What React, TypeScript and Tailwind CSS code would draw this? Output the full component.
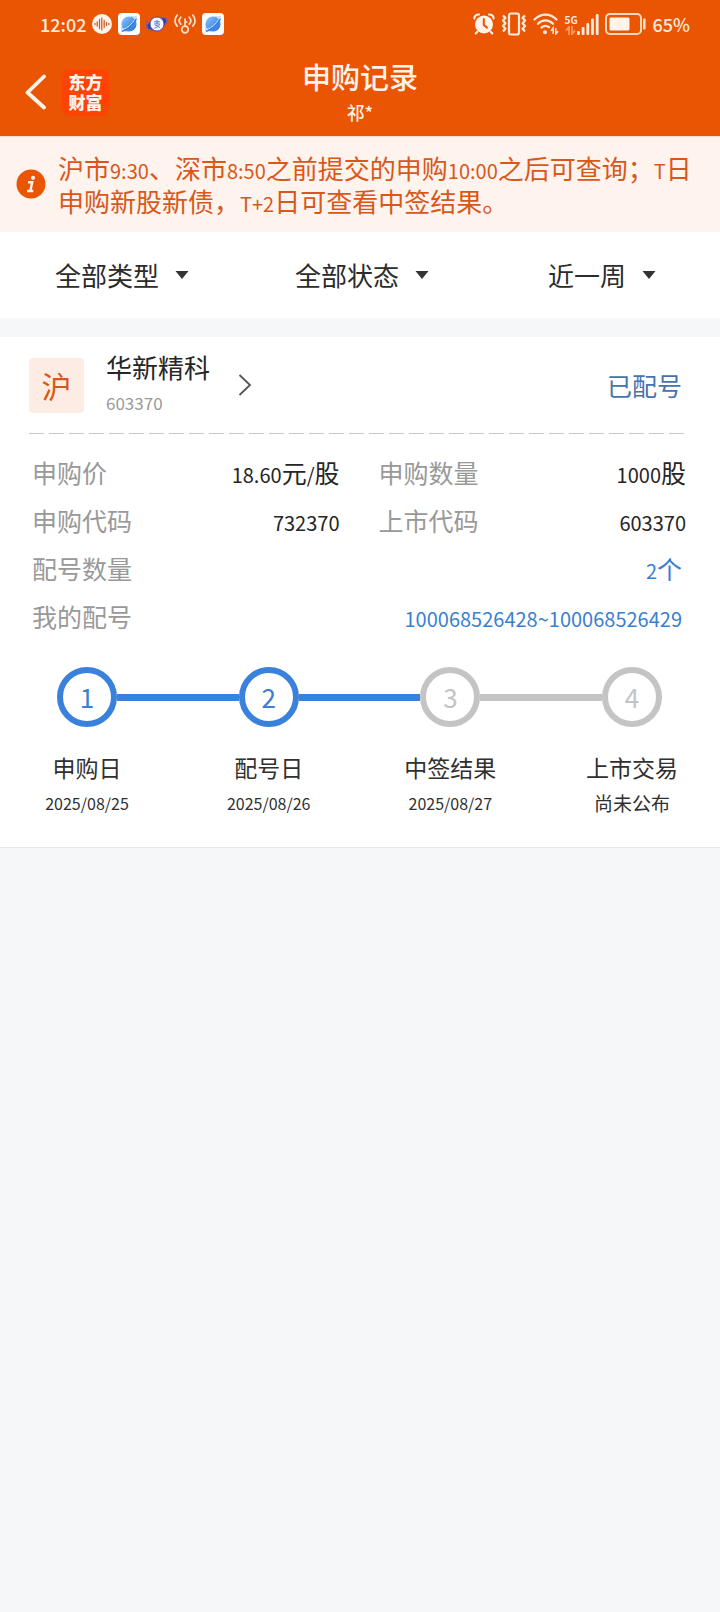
import React from "react";

const NOTICE =
  "沪市9:30、深市8:50之前提交的申购10:00之后可查询；T日申购新股新债，T+2日可查看中签结果。";

/* Sets runs of digits and Latin letters a step smaller than the Chinese around them. */
function Mixed({ text }: { text: string }) {
  return (
    <>
      {text.split(/([0-9A-Z:.+~/]+)/).map((part, i) =>
        i % 2 === 1 ? (
          <span key={i} className="text-[20px] leading-5">
            {part}
          </span>
        ) : (
          part
        ),
      )}
    </>
  );
}

function VoiceIcon() {
  return (
    <svg width="20" height="20" viewBox="0 0 20 20" aria-hidden="true">
      <circle cx="10" cy="10" r="10" fill="#fff3ea" />
      <path
        d="M3 9.5v1M5.2 8v4M7.500 5.500v9M9.800 4v12M12.200 6.500v7M14.500 8.500v3M16.800 9.5v1"
        stroke="#c9602f"
        strokeWidth="1.300"
        strokeLinecap="round"
      />
    </svg>
  );
}

function PlanetIcon({ id }: { id: string }) {
  return (
    <svg width="22" height="22" viewBox="0 0 22 22" aria-hidden="true">
      <defs>
        <linearGradient id={id} x1="0" y1="0" x2="1" y2="1">
          <stop offset="0" stopColor="#8cc6fb" />
          <stop offset="1" stopColor="#1f6fdc" />
        </linearGradient>
      </defs>
      <rect width="22" height="22" rx="4" fill="#fdfdfd" />
      <path d="M12 3h7v6zM3 13v6h7z" fill="#cfe0f8" />
      <circle cx="11" cy="11" r="7.6" fill={`url(#${id})`} />
      <path d="M5 16.500C9.500 15 14.500 10.500 17.200 6" stroke="#cfe6ff" strokeWidth="1" fill="none" />
      <path d="M4 18.300c5-1 11.500-6.300 14.400-12.600" stroke="#2f7be6" strokeWidth="1.200" fill="none" />
    </svg>
  );
}

function PayIcon() {
  return (
    <svg width="22" height="18" viewBox="0 0 22 18" aria-hidden="true">
      <ellipse cx="11" cy="9" rx="11" ry="5" transform="rotate(-22 11 9)" fill="#3b3a94" />
      <path d="M1.500 5.500c-1.200 3-.8 7 .5 8.500 1 .8 2 .8 3.500.4M15 3.200c2-.6 4.500-.8 5.300.8.600 1.500 0 4-1.300 6" stroke="#6a62b8" strokeWidth="1.300" fill="none" />
      <circle cx="11" cy="9" r="7" fill="#f4f7ff" stroke="#3b3a94" strokeWidth="0.800" />
      <path
        d="M8 6.800h6M11 4.800v4M8.200 8.900h5.400c-.8 2.400-2.800 3.800-5.200 4.200M8.900 10c1.800.4 3.500 1.300 5 2.600"
        stroke="#4e6cc0"
        strokeWidth="0.900"
        fill="none"
      />
    </svg>
  );
}

function KeySignalIcon() {
  return (
    <svg width="22" height="20" viewBox="0 0 22 20" fill="none" stroke="#ffe3cf" strokeWidth="1.700" strokeLinecap="round" aria-hidden="true">
      <path d="M3.200 1.200c-3 3.200-3 7.800 0 11M6.800 3.200c-2 2.200-2 5 0 7M18.800 1.200c3 3.200 3 7.800 0 11M15.200 3.200c2 2.200 2 5 0 7" />
      <circle cx="11" cy="15.500" r="3.300" />
      <path d="M11 12V5M11 8h1.800" />
    </svg>
  );
}

function AlarmIcon() {
  return (
    <svg width="22" height="22" viewBox="0 0 22 22" aria-hidden="true">
      <circle cx="11" cy="11.500" r="9" fill="#fff3ea" />
      <path
        d="M1.300 5.600C1.500 3 3.500 1.500 6 1.500M20.700 5.600C20.500 3 18.500 1.500 16 1.500M4.500 18.500l-1.800 2M17.500 18.500l1.800 2"
        stroke="#fff3ea"
        strokeWidth="2"
        strokeLinecap="round"
        fill="none"
      />
      <path d="M10.800 6v6l3.200 2.600" stroke="#ea5504" strokeWidth="2" fill="none" strokeLinecap="round" />
    </svg>
  );
}

function VibrateIcon() {
  return (
    <svg width="26" height="24" viewBox="0 0 26 24" fill="none" stroke="#ffeadb" aria-hidden="true">
      <rect x="8" y="1.500" width="10" height="21" rx="2" strokeWidth="2.200" />
      <path
        d="M2 3.500l2.400 2.400L2 8.600l2.400 2.700L2 14l2.400 2.700L2 19.500M24 3.500l-2.400 2.400L24 8.600l-2.400 2.700L24 14l-2.400 2.700L24 19.500"
        strokeWidth="2.200"
        strokeLinejoin="round"
      />
    </svg>
  );
}

function WifiIcon() {
  return (
    <svg width="26" height="22" viewBox="0 0 26 22" fill="none" aria-hidden="true">
      <path
        d="M1.500 6.500c6.500-6.500 15.500-6.500 22 0M5 10.800c4.500-4.500 10.500-4.500 15 0M8.500 14.600c2.400-2.200 5.200-2.200 7.500-.4"
        stroke="#ffeadb"
        strokeWidth="2.200"
        strokeLinecap="round"
      />
      <circle cx="12" cy="19.200" r="2" fill="#ffeadb" />
      <path d="M20.200 21v-6l-2.200 2.800M22.800 15v6l2.200-2.800" stroke="#ffeadb" strokeWidth="1.500" />
    </svg>
  );
}

function SignalIcon() {
  return (
    <span className="flex items-end">
      <span className="flex w-3 flex-col">
        <span className="text-[10px] leading-3 font-bold text-[#ffeadb]">5G</span>
        <svg width="11" height="9" viewBox="0 0 11 9" fill="none" aria-hidden="true">
          <path d="M4 9V1L1 4.500M7 0v8l3-3.500" stroke="#ff9a63" strokeWidth="1.800" />
        </svg>
      </span>
      <svg width="22" height="21" viewBox="0 0 22 21" fill="#ffeadb" aria-hidden="true">
        <rect x="0" y="17" width="2.800" height="4" rx="1" />
        <rect x="4.700" y="13" width="2.800" height="8" rx="1" />
        <rect x="9.400" y="9" width="2.800" height="12" rx="1" />
        <rect x="14.100" y="4.500" width="2.800" height="16.500" rx="1" />
        <rect x="18.800" y="0" width="2.800" height="21" rx="1" />
      </svg>
    </span>
  );
}

function BatteryIcon() {
  return (
    <svg width="42" height="22" viewBox="0 0 42 22" aria-hidden="true">
      <rect x="1" y="1" width="35" height="20" rx="4" fill="none" stroke="#ffd9bd" strokeWidth="2" />
      <rect x="4.500" y="4.500" width="20" height="13" rx="1.500" fill="#fff3ea" />
      <rect x="38" y="5.500" width="2.600" height="11" rx="1" fill="#ffe3cf" />
    </svg>
  );
}

function StatusBar() {
  return (
    <div className="flex h-12 items-center justify-between pr-[30px] pl-10 text-[18px] leading-6 font-medium text-[#ffeadb]">
      <div className="flex items-center gap-[6px]">
        <span>12:02</span>
        <VoiceIcon />
        <PlanetIcon id="planet-a" />
        <PayIcon />
        <KeySignalIcon />
        <PlanetIcon id="planet-b" />
      </div>
      <div className="flex items-center gap-[6px]">
        <AlarmIcon />
        <VibrateIcon />
        <WifiIcon />
        <SignalIcon />
        <BatteryIcon />
        <span>65%</span>
      </div>
    </div>
  );
}

function TitleBar() {
  return (
    <div className="grid h-[88px] grid-cols-[1fr_auto_1fr] items-start">
      <div className="flex items-center gap-4 pt-5 pl-6">
        <button type="button" aria-label="返回" className="flex h-12 w-[22px] items-center">
          <svg width="22" height="36" viewBox="0 0 22 36" fill="none" aria-hidden="true">
            <path d="M20 2.500L3.500 18.500 20 33.500" stroke="#fff3ea" strokeWidth="3.800" strokeLinecap="round" strokeLinejoin="round" />
          </svg>
        </button>
        <span className="flex size-[47px] items-center justify-center rounded-lg bg-[#ff4305] text-[#fff3ea]">
          <span className="w-9 text-center text-[17px] leading-5 font-black">东方财富</span>
        </span>
      </div>
      <div className="flex flex-col items-center pt-2 text-[#fff3ea]">
        <h1 className="text-[29px] leading-10 font-medium">申购记录</h1>
        <p className="text-[18px] leading-8 font-medium">祁*</p>
      </div>
    </div>
  );
}

function Filter({ label }: { label: string }) {
  return (
    <button type="button" className="flex items-center justify-center gap-4 pl-1 text-[26px] leading-9 text-[#2b2b2b]">
      {label}
      <svg width="14" height="8" viewBox="0 0 14 8" fill="#333" aria-hidden="true">
        <path d="M0.500 0h13L7 8z" />
      </svg>
    </button>
  );
}

function Field({ label, value, wide, blue }: { label: string; value: string; wide?: boolean; blue?: boolean }) {
  return (
    <div className={`flex h-12 items-center justify-between ${wide ? "col-span-2" : ""}`}>
      <dt className="pl-[3px] text-[#999]">{label}</dt>
      <dd className={blue ? "pr-1 text-[#3a7fd0]" : "text-[#262626]"}>
        <Mixed text={value} />
      </dd>
    </div>
  );
}

const STEPS = [
  { title: "申购日", date: "2025/08/25", done: true },
  { title: "配号日", date: "2025/08/26", done: true },
  { title: "中签结果", date: "2025/08/27", done: false },
  { title: "上市交易", date: "尚未公布", done: false },
];

function Steps() {
  return (
    <ol className="flex pt-[27px] pr-6 pl-7">
      {STEPS.map((step, i) => (
        <React.Fragment key={step.title}>
          {i > 0 && (
            <li
              aria-hidden="true"
              className={`mt-[27px] h-[7px] flex-1 ${STEPS[i - 1].done ? "bg-[#3a81dc]" : "bg-[#c4c4c4]"}`}
            />
          )}
          <li className="flex w-[60px] flex-col items-center whitespace-nowrap text-[#303030]">
            <span
              className={`flex size-[60px] items-center justify-center rounded-full border-6 text-[26px] leading-8 ${
                step.done ? "border-[#3a81dc] text-[#3a7fd0]" : "border-[#c4c4c4] text-[#c4c4c4]"
              }`}
            >
              {i + 1}
            </span>
            <span className="mt-[22px] text-[23px] leading-9">{step.title}</span>
            <span className={`leading-9 ${/^\d/.test(step.date) ? "text-[16px]" : "text-[19px]"}`}>{step.date}</span>
          </li>
        </React.Fragment>
      ))}
    </ol>
  );
}

export default function App() {
  return (
    <div className="min-h-screen bg-[#f6f7f9] font-['Noto_Sans_CJK_SC',sans-serif]">
      <header className="bg-[#ea5504]">
        <StatusBar />
        <TitleBar />
      </header>

      <section className="flex items-center gap-3 border-t border-[#ffe0c0] bg-[#fff3ee] pt-[14px] pr-5 pb-[15px] pl-4">
        <svg width="30" height="30" viewBox="0 0 30 30" className="shrink-0" aria-hidden="true">
          <circle cx="15" cy="15" r="14.500" fill="#ea5504" />
          <circle cx="17" cy="8.800" r="2.100" fill="#fff3ee" />
          <path d="M12 13.200h4.200l-1.800 8.600M11 22h6.300" stroke="#fff3ee" strokeWidth="2.400" fill="none" />
        </svg>
        <p className="flex-1 text-[26px] leading-[33px] text-[#d8581a]">
          <Mixed text={NOTICE} />
        </p>
      </section>

      <nav className="grid h-[86px] grid-cols-3 bg-white">
        <Filter label="全部类型" />
        <Filter label="全部状态" />
        <Filter label="近一周" />
      </nav>

      <main className="mt-[19px] border-b border-[#e8e8e8] bg-white pt-3 pr-[34px] pb-[26px] pl-[29px]">
        <div className="flex items-center">
          <span className="flex size-[55px] items-center justify-center rounded-sm bg-[#fdece3] text-[30px] leading-9 text-[#d8581a]">
            沪
          </span>
          <button type="button" className="ml-[22px] flex items-center gap-7 text-left">
            <span className="flex flex-col">
              <span className="text-[26px] leading-9 text-[#262626]">华新精科</span>
              <span className="text-[17px] leading-9 text-[#999]">603370</span>
            </span>
            <svg width="14" height="22" viewBox="0 0 14 22" fill="none" aria-hidden="true">
              <path d="M1.500 1L12 11 1.500 21" stroke="#555" strokeWidth="1.800" />
            </svg>
          </button>
          <span className="ml-auto pr-1 text-[25px] leading-9 text-[#4673ab]">已配号</span>
        </div>

        <div className="mt-3 h-px bg-[repeating-linear-gradient(90deg,#c8c8c8_0px,#c8c8c8_15px,transparent_15px,transparent_20px)]" />

        <dl className="mt-[14px] grid grid-cols-2 gap-x-9 text-[25px] leading-9">
          <Field label="申购价" value="18.60元/股" />
          <Field label="申购数量" value="1000股" />
          <Field label="申购代码" value="732370" />
          <Field label="上市代码" value="603370" />
          <Field label="配号数量" value="2个" wide blue />
          <Field label="我的配号" value="100068526428~100068526429" wide blue />
        </dl>

        <Steps />
      </main>
    </div>
  );
}
